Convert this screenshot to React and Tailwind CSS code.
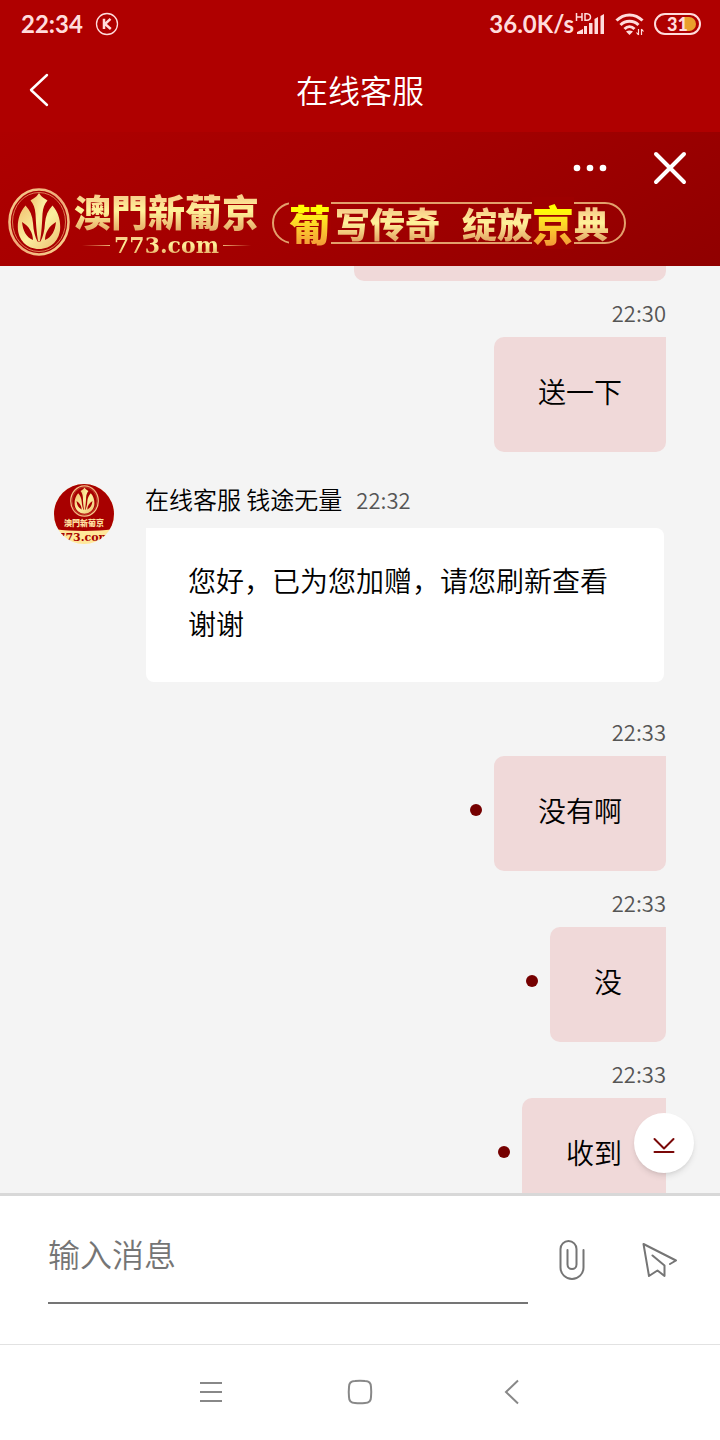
import React from "react";

const goldText =
  "bg-linear-to-b from-[#f3bd83] via-[#fff29a] to-[#e0a060] bg-clip-text text-transparent";
const brightText =
  "block bg-linear-to-b from-[#ffff00] from-25% to-[#f08f38] bg-clip-text text-[42px] leading-[52px] text-transparent";

function Emblem({ className }) {
  return (
    <svg viewBox="0 0 62 68" className={className} fill="none" aria-hidden="true">
      <defs>
        <linearGradient id="ring" x1="0" y1="0" x2="1" y2="1">
          <stop offset="0" stopColor="#f6d08c" />
          <stop offset="0.5" stopColor="#f0a878" />
          <stop offset="1" stopColor="#f8d890" />
        </linearGradient>
        <linearGradient id="gold" x1="0" y1="0" x2="1" y2="1">
          <stop offset="0" stopColor="#f0c070" />
          <stop offset="0.5" stopColor="#fbf0a0" />
          <stop offset="1" stopColor="#ecbc70" />
        </linearGradient>
      </defs>
      <ellipse cx="31" cy="34" rx="29.5" ry="32.5" stroke="url(#ring)" strokeWidth="2.6" />
      <ellipse cx="31" cy="34" rx="26.500" ry="29.500" stroke="#e89a66" strokeWidth="0.8" />
      <path
        d="M31 5C28.500 9 26.500 10 22.500 12.500C25.500 16 27 20 27.500 26C28 36 28.500 45 30 53H32C33.500 45 34 36 34.500 26C35 20 36.500 16 39.500 12.500C35.500 10 33.500 9 31 5Z"
        fill="url(#gold)"
      />
      <path
        d="M17.500 17.500C12 24 9.800 31 9.800 39C9.800 52 19 61 31 61C43 61 52.200 52 52.200 39C52.200 31 50 24 44.500 17.500C40 22 37.500 28 37 35C36.500 43 35 49 32.500 53.500H29.500C27 49 25.500 43 25 35C24.500 28 22 22 17.500 17.500Z"
        fill="url(#gold)"
      />
      <path
        d="M14 34C15 43 18 49 25 52C25 45 21 38 14 34ZM48 34C47 43 44 49 37 52C37 45 41 38 48 34Z"
        fill="#a80000"
      />
    </svg>
  );
}

function StatusBar() {
  return (
    <div className="flex h-12 items-center pr-[19px] pl-[21px] font-['Lato','Noto_Sans',sans-serif] text-[24px] leading-6 font-bold text-[#ffdcdc]">
      <span>22:34</span>
      <svg viewBox="0 0 24 24" className="ml-3 size-6" fill="none" stroke="currentColor" aria-hidden="true">
        <circle cx="12" cy="12" r="10.5" strokeWidth="1.3" />
        <path d="M9 6.8V17M15.5 6.8 10 12l5.8 5" strokeWidth="2.5" />
      </svg>
      <span className="ml-auto">36.0K/s</span>
      <svg viewBox="0 0 31 24" className="ml-px h-6 w-[31px]" fill="currentColor" aria-hidden="true">
        <path d="M1.500 1V9M7 1V9M1.500 5H7M10 1.700V8.300H12Q15.500 8 15.500 5T12 1.700Z" fill="none" stroke="currentColor" strokeWidth="1.500" />
        <path d="M2 22v-2l6-3v5zM9 22v-8h3v8zM14 22v-11h3.500v11zM19.500 22V7l3.500-2v17zM25.500 22V4l3.500-2v20z" />
      </svg>
      <svg viewBox="0 0 30 24" className="ml-[9px] h-6 w-[30px]" fill="none" stroke="currentColor" strokeWidth="3" aria-hidden="true">
        <path d="M1.500 8.500C9 1 20 1 27.500 8.500M5.500 13c5-5 13-5 18 0M9.500 17c3-3 7-3 10 0" />
        <path d="M11 19.500q3.500-2 7 0l-3.500 3.500z" fill="currentColor" stroke="none" />
        <path d="M23.500 17v6M21.500 20.500l2 2.500M26.500 23v-6M28.500 19.500l-2-2.500" strokeWidth="1.200" />
      </svg>
      <div className="ml-[9px] flex h-[22px] w-[47px] items-center rounded-full border-2 border-current px-[3px]">
        <div className="flex h-3.5 w-full items-center justify-end rounded-full bg-linear-to-r from-transparent from-65% to-[#e9a02c] to-65% pr-2 text-[18px] leading-4 font-black">
          31
        </div>
      </div>
    </div>
  );
}

function Banner() {
  return (
    <section className="flex h-[134px] shrink-0 flex-col bg-linear-150 from-[#ae0000] via-[#a20000] to-[#900000]">
      <div className="flex h-14 items-start justify-end gap-[46px] pt-[18px] pr-[33px]">
        <button aria-label="更多" className="text-white">
          <svg viewBox="0 0 34 36" className="h-9 w-[34px]" fill="currentColor">
            <circle cx="4" cy="18" r="3.300" />
            <circle cx="17" cy="18" r="3.300" />
            <circle cx="30" cy="18" r="3.300" />
          </svg>
        </button>
        <button aria-label="关闭" className="text-white">
          <svg viewBox="0 0 34 36" className="h-9 w-[34px]" fill="none" stroke="currentColor" strokeWidth="4" strokeLinecap="round">
            <path d="M3 4 31 32M31 4 3 32" />
          </svg>
        </button>
      </div>
      <div className="flex items-start pl-2 font-['Noto_Sans_CJK_TC',sans-serif]">
        <Emblem className="h-[68px] w-[62px] shrink-0" />
        <div className="ml-1 flex shrink-0 flex-col">
          <span className={`${goldText} text-[37px] leading-[46px] font-black`}>澳門新葡京</span>
          <span className="flex items-center justify-center gap-1">
            <i className="h-px w-7 bg-linear-to-r from-transparent to-[#eeb476]" />
            <span className={`${goldText} font-['DejaVu_Serif',serif] text-[22px] leading-[22px] font-bold`}>
              773.com
            </span>
            <i className="h-px w-7 bg-linear-to-l from-transparent to-[#eeb476]" />
          </span>
        </div>
        <div className="mt-[14px] ml-[13px] flex h-[42px] shrink-0 items-center rounded-full border-2 border-[#e3a06c] px-[15px] text-[35px] font-black">
          <span className="bg-[#a30000]">
            <span className={brightText}>葡</span>
          </span>
          <span className={`${goldText} ml-1 leading-[38px]`}>写传奇</span>
          <span className={`${goldText} ml-[22px] leading-[38px]`}>绽放</span>
          <span className="bg-[#9d0000]">
            <span className={brightText}>京</span>
          </span>
          <span className={`${goldText} leading-[38px]`}>典</span>
        </div>
      </div>
    </section>
  );
}

function Sent({ time, text, unread }) {
  return (
    <article className="flex flex-col items-end pr-[54px]">
      <time className="flex h-14 items-end text-[22px] leading-[50px] text-[#555]">{time}</time>
      <div className="flex items-start gap-3">
        {unread && <i className="mt-12 size-3 rounded-full bg-[#750000]" />}
        <p className="rounded-[10px] rounded-tr-none bg-[#f0d9d9] px-11 pt-[33px] pb-[39px] text-[28px] leading-[43px] text-black">
          {text}
        </p>
      </div>
    </article>
  );
}

function Avatar() {
  return (
    <div className="flex size-[60px] shrink-0 flex-col items-center overflow-hidden rounded-full bg-[#ffe79a] font-['Noto_Sans_CJK_TC',sans-serif]">
      <div className="flex h-[47px] w-20 shrink-0 flex-col items-center rounded-b-[50%_6px] bg-[#a80000] pt-px">
        <Emblem className="h-8 w-[29px] shrink-0" />
        <span className="text-[8px] leading-[11px] font-black whitespace-nowrap text-[#ffe0a0]">澳門新葡京</span>
      </div>
      <span className="font-['DejaVu_Serif',serif] text-[11px] leading-[13px] font-bold text-[#a80000]">
        773.com
      </span>
    </div>
  );
}

function Received({ name, time, text }) {
  return (
    <article className="mt-8 mb-[18px] flex gap-[31px] pr-14 pl-[54px]">
      <Avatar />
      <div className="min-w-0 flex-1">
        <div className="mb-[14px] flex items-center gap-[14px] leading-[30px]">
          <h2 className="text-[24px] text-black">{name}</h2>
          <time className="text-[22px] text-[#555]">{time}</time>
        </div>
        <p className="ml-px rounded-lg rounded-tl-none bg-white px-[42px] pt-[31px] pb-[37px] text-[28px] leading-[43px] text-black">
          {text}
        </p>
      </div>
    </article>
  );
}

export default function App() {
  return (
    <div className="flex h-screen flex-col overflow-hidden bg-[#f4f4f4] font-['Noto_Sans_CJK_SC',sans-serif] font-[350]">
      <header className="shrink-0 bg-[#af0000] text-white">
        <StatusBar />
        <div className="grid h-[84px] grid-cols-[1fr_auto_1fr] items-center px-6">
          <button aria-label="返回" className="justify-self-start">
            <svg viewBox="0 0 32 40" className="h-10 w-8" fill="none" stroke="currentColor" strokeWidth="2.400" strokeLinecap="round" strokeLinejoin="round">
              <path d="M23 5 7 20 23 35" />
            </svg>
          </button>
          <h1 className="pb-[2px] text-[32px] leading-10">在线客服</h1>
        </div>
      </header>
      <Banner />
      <main className="relative min-h-0 flex-1 overflow-hidden">
        <div className="mr-[54px] ml-auto h-[15px] w-[312px] rounded-b-[10px] bg-[#f0d9d9]" />
        <Sent time="22:30" text="送一下" />
        <Received name="在线客服 钱途无量" time="22:32" text="您好，已为您加赠，请您刷新查看谢谢" />
        <Sent time="22:33" text="没有啊" unread />
        <Sent time="22:33" text="没" unread />
        <Sent time="22:33" text="收到" unread />
        <button
          aria-label="滚动到底部"
          className="absolute right-[26px] bottom-5 flex size-[60px] items-center justify-center rounded-full bg-white text-[#7a0808] shadow-md"
        >
          <svg viewBox="0 0 24 24" className="mt-[5px] size-6" fill="none" stroke="currentColor" strokeWidth="2" strokeLinecap="round" strokeLinejoin="round">
            <path d="M2.500 5 12 14.500 21.500 5M2.500 18H21.500" />
          </svg>
        </button>
      </main>
      <form
        className="flex h-[151px] shrink-0 items-start border-t-[3px] border-[#d8d8d8] bg-white pr-10 pl-12"
        onSubmit={(e) => e.preventDefault()}
      >
        <input
          aria-label="输入消息"
          placeholder="输入消息"
          className="h-[108px] min-w-0 flex-1 border-b-2 border-[#757575] bg-transparent pt-2 text-[32px] text-black outline-none placeholder:text-[#757575]"
        />
        <button type="button" aria-label="添加附件" className="mt-11 ml-[22px] text-[#757575]">
          <svg viewBox="0 0 40 40" className="size-10" fill="none" stroke="currentColor" strokeWidth="2" strokeLinecap="round">
            <path d="M33.500 10V27.500A11.500 11.500 0 0 1 10.500 27.500V9A8 8 0 0 1 26.500 9V24.500A4.500 4.500 0 0 1 17.500 24.500V10" />
          </svg>
        </button>
        <button type="submit" aria-label="发送" className="mt-11 ml-12 text-[#757575]">
          <svg viewBox="0 0 42 40" className="h-10 w-[42px]" fill="none" stroke="currentColor" strokeWidth="2" strokeLinecap="round" strokeLinejoin="round">
            <path d="M32 24 38 20.500 5.500 4 11 36 19.500 30.500 26.500 36V25.500L14.500 15.500" />
          </svg>
        </button>
      </form>
      <nav className="grid h-24 shrink-0 grid-cols-3 items-center justify-items-center border-t border-[#e2e2e2] bg-white px-[135px] text-[#888]">
        <button aria-label="最近任务">
          <svg viewBox="0 0 28 28" className="size-7" fill="none" stroke="currentColor" strokeWidth="2">
            <path d="M4 4H26M4 13H26M4 22H26" />
          </svg>
        </button>
        <button aria-label="主页">
          <svg viewBox="0 0 28 28" className="size-7" fill="none" stroke="currentColor" strokeWidth="2">
            <path d="M3 8Q3 2 9 2Q14 1.500 19 2Q25 2 25 8Q25.500 13 25 18Q25 24 19 24Q14 24.500 9 24Q3 24 3 18Q2.500 13 3 8Z" />
          </svg>
        </button>
        <button aria-label="后退">
          <svg viewBox="0 0 28 28" className="size-7" fill="none" stroke="currentColor" strokeWidth="2">
            <path d="M22 1.500 10 13 22 24.500" />
          </svg>
        </button>
      </nav>
    </div>
  );
}
